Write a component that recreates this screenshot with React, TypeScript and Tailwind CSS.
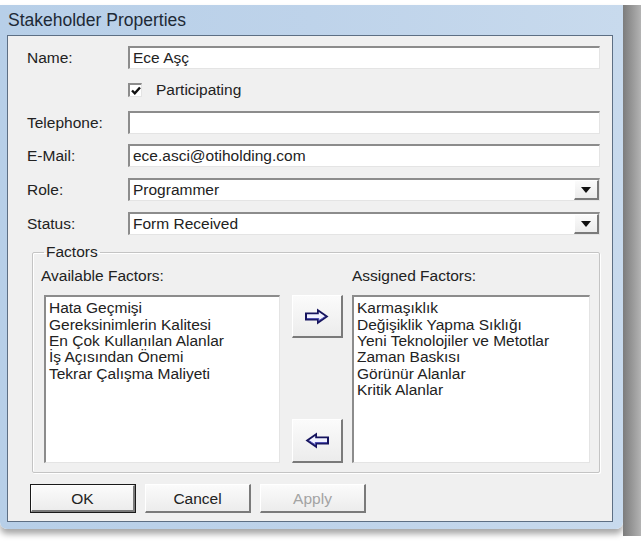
import type { ReactNode } from 'react'

const available = [
  'Hata Geçmişi',
  'Gereksinimlerin Kalitesi',
  'En Çok Kullanılan Alanlar',
  'İş Açısından Önemi',
  'Tekrar Çalışma Maliyeti',
]

const assigned = [
  'Karmaşıklık',
  'Değişiklik Yapma Sıklığı',
  'Yeni Teknolojiler ve Metotlar',
  'Zaman Baskısı',
  'Görünür Alanlar',
  'Kritik Alanlar',
]

// classic sunken 3D edge used by text boxes, combos and list boxes
const sunken =
  'bg-white border-t-2 border-l-2 border-t-[#8c8c8c] border-l-[#8c8c8c] border-b border-r border-b-[#e4e4e4] border-r-[#e4e4e4]'

const raised =
  'bg-gradient-to-b from-[#fbfbfb] to-[#ececec] border-t border-l border-t-white border-l-white border-b-2 border-r-2 border-b-[#7a7a7a] border-r-[#7a7a7a]'

function Row({ label, children }: { label: string; children: ReactNode }) {
  return (
    <div className="flex items-center h-[23px]">
      <span className="w-[101px] shrink-0">{label}</span>
      <div className="flex-1 h-full">{children}</div>
    </div>
  )
}

function TextBox({ value = '' }: { value?: string }) {
  return (
    <div className={`${sunken} h-full flex items-center pl-[3px] leading-none`}>{value}</div>
  )
}

function Combo({ value }: { value: string }) {
  return (
    <div className={`${sunken} h-full flex items-center`}>
      <span className="flex-1 pl-[3px] leading-none">{value}</span>
      <div className={`${raised} w-[25px] h-full flex items-center justify-center`}>
        <svg width="10" height="6" viewBox="0 0 10 6">
          <path d="M0 0H10L5 6Z" fill="#111" />
        </svg>
      </div>
    </div>
  )
}

// fat 3D arrow used on the move buttons
function Arrow({ left = false }: { left?: boolean }) {
  return (
    <svg width="26" height="17" viewBox="0 0 26 17" className={left ? '-scale-x-100' : ''}>
      <path d="M1 4.5H13V0.5L24.5 8.5L13 16.5V12.5H1Z" fill="#16145e" />
      <path d="M3 6.3H14.8V4L21.3 8.4L14.8 12.8V10.6H3Z" fill="#f1f2ff" />
      <path d="M3 10.6H14.8V12.8L21.3 8.4" fill="none" stroke="#4a4ab0" strokeWidth="1" />
    </svg>
  )
}

function ListBox({ items }: { items: string[] }) {
  return (
    <div className={`${sunken} h-[168px] pt-[3px] pl-[3px] leading-[16.4px]`}>
      {items.map((it) => (
        <div key={it} className="whitespace-nowrap">{it}</div>
      ))}
    </div>
  )
}

function DialogButton({ children, primary = false, disabled = false }: { children: ReactNode; primary?: boolean; disabled?: boolean }) {
  return (
    <div className={`w-[106px] h-[29px] ${primary ? 'border border-[#1a1a1a]' : ''}`}>
      <div
        className={`${raised} h-full flex items-center justify-center ${disabled ? 'text-[#a3a3a3]' : 'text-[#222]'}`}
      >
        {children}
      </div>
    </div>
  )
}

export default function App() {
  return (
    <div className="w-[641px] h-[541px] bg-white pt-[5px] font-['Liberation_Sans',Arial,sans-serif] text-[15.5px] text-[#222] overflow-hidden">
      <div className="flex">
        <div className="w-[623px] h-[524px] rounded-b-[7px] bg-gradient-to-r from-[#b7cfe8] via-[#bed3ea] to-[#c8daed] pl-[7px] pr-[10px] pb-[7px] flex flex-col shadow-[0_5px_6px_rgba(0,0,0,0.35)]">
          {/* caption */}
          <div className="h-[30px] flex items-center pl-[1px] text-[17.5px] text-[#1e2a36]">
            Stakeholder Properties
          </div>

          {/* client area */}
          <div className="flex-1 border border-[#5d6f84] bg-[#f0f0f0] pl-[19px] pr-[12px] pt-[10px] flex flex-col">
            <Row label="Name:">
              <TextBox value="Ece Aşç" />
            </Row>

            <div className="flex items-center mt-[14px] ml-[101px] h-[14px]">
              <div className={`${sunken} w-[14px] h-[14px] flex items-center justify-center`}>
                <svg width="10" height="9" viewBox="0 0 10 9">
                  <path d="M1 4.5L3.8 7.3L9 1.5" fill="none" stroke="#111" strokeWidth="2.4" />
                </svg>
              </div>
              <span className="ml-[14px]">Participating</span>
            </div>

            <div className="mt-[14px]">
              <Row label="Telephone:">
                <TextBox />
              </Row>
            </div>
            <div className="mt-[10px]">
              <Row label="E-Mail:">
                <TextBox value="ece.asci@otiholding.com" />
              </Row>
            </div>
            <div className="mt-[11px]">
              <Row label="Role:">
                <Combo value="Programmer" />
              </Row>
            </div>
            <div className="mt-[11px]">
              <Row label="Status:">
                <Combo value="Form Received" />
              </Row>
            </div>

            <fieldset className="mt-[8px] ml-[5px] border border-[#c4c4c4] shadow-[inset_1px_1px_0_#fff,1px_1px_0_#fff] rounded-[2px] pl-[11px] pr-[9px] pb-[9px] pt-0">
              <legend className="ml-[0px] px-[2px] leading-[18px]">Factors</legend>
              <div className="flex pt-[3px]">
                <span className="w-[248px] -ml-[3px]">Available Factors:</span>
                <span className="ml-[63px]">Assigned Factors:</span>
              </div>
              <div className="flex mt-[8px]">
                <div className="w-[236px]">
                  <ListBox items={available} />
                </div>
                <div className="w-[51px] ml-[12px] h-[168px] flex flex-col justify-between">
                  <div className={`${raised} h-[43px] flex items-center justify-center`}>
                    <Arrow />
                  </div>
                  <div className={`${raised} h-[44px] flex items-center justify-center`}>
                    <Arrow left />
                  </div>
                </div>
                <div className="flex-1 ml-[9px]">
                  <ListBox items={assigned} />
                </div>
              </div>
            </fieldset>

            <div className="flex gap-[9px] mt-[11px] ml-[3px]">
              <DialogButton primary>OK</DialogButton>
              <DialogButton>Cancel</DialogButton>
              <DialogButton disabled>Apply</DialogButton>
            </div>
          </div>
        </div>
        <div className="w-[18px] h-[531px] bg-gradient-to-r from-[#7c7c7c] to-[#b3b3b3]" />
      </div>
    </div>
  )
}
